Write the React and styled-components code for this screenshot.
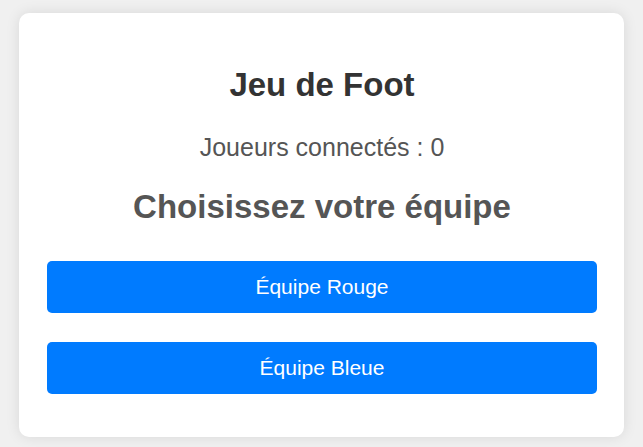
import React from 'react'
import styled, { createGlobalStyle } from 'styled-components'

const GlobalStyle = createGlobalStyle`
  html, body {
    margin: 0;
    padding: 0;
    background: #f0f0f0;
    font-family: "Liberation Sans", Arial, sans-serif;
  }
`

const Page = styled.div`
  box-sizing: border-box;
  width: 643px;
  height: 447px;
  padding: 13px 19px 10px;
`

const Card = styled.div`
  box-sizing: border-box;
  width: 605px;
  height: 424px;
  background: #fff;
  border-radius: 10px;
  box-shadow: 0 0 14px rgba(0, 0, 0, 0.1);
  padding: 53px 27px 0 28px;
  display: flex;
  flex-direction: column;
  align-items: stretch;
  text-align: center;
`

const Title = styled.h1`
  margin: 0;
  font-size: 33px;
  line-height: 38px;
  font-weight: bold;
  color: #333;
`

const Players = styled.p`
  margin: 28.5px 0 0;
  font-size: 25px;
  line-height: 28px;
  color: #555;
`

const Subtitle = styled.h2`
  margin: 27px 0 0;
  font-size: 33px;
  line-height: 38px;
  font-weight: bold;
  color: #555;
`

const TeamButton = styled.button`
  display: block;
  width: 100%;
  height: 52px;
  margin-top: ${({ $first }) => ($first ? '35.5px' : '29px')};
  border: none;
  border-radius: 5px;
  background: #007bff;
  color: #fff;
  font-family: "Liberation Sans", Arial, sans-serif;
  font-size: 21px;
  cursor: pointer;
  padding: 0;
`

const App = () => {
  const players = 0

  return (
    <>
      <GlobalStyle />
      <Page>
        <Card>
          <Title>Jeu de Foot</Title>
          <Players>Joueurs connectés : {players}</Players>
          <Subtitle>Choisissez votre équipe</Subtitle>
          <TeamButton $first>Équipe Rouge</TeamButton>
          <TeamButton>Équipe Bleue</TeamButton>
        </Card>
      </Page>
    </>
  )
}

export default App
